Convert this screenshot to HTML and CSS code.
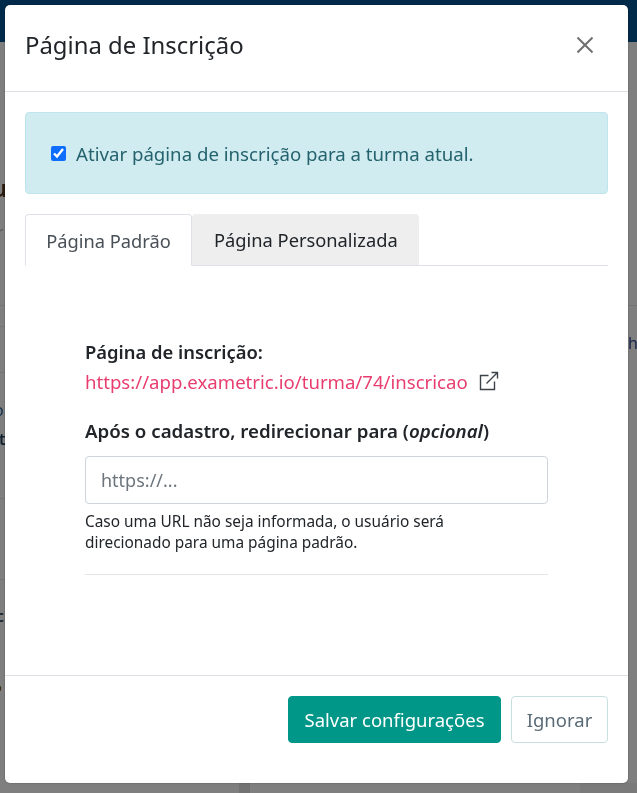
FILE: index.html
```html
<!DOCTYPE html>
<html lang="pt">
<head>
<meta charset="utf-8">
<title>Página de Inscrição</title>
<link rel="stylesheet" href="styles.css">
</head>
<body>
<div class="page">
  <div class="topbar"></div>
  <div class="line l1"></div>
  <div class="line l2"></div>
  <div class="line l3"></div>
  <div class="line l4"></div>
  <div class="line l5"></div>
  <div class="line l6"></div>
  <span class="frag f1">u</span>
  <span class="frag f2">r</span>
  <span class="frag f3">o</span>
  <span class="frag f4">t</span>
  <span class="frag f5">c</span>
  <span class="frag f6">o</span>
  <span class="frag f7">h</span>
  <div class="col c1"></div>
  <div class="col c2"></div>
</div>
<main class="modal">
  <header class="modal-header">
    <h1 class="modal-title">Página de Inscrição</h1>
    <button class="close" type="button" aria-label="Fechar">
      <svg width="16" height="16" viewBox="0 0 16 16"><path d="M0.5 0.5 15.5 15.5M15.5 0.5 0.5 15.5" stroke="#6f6f6f" stroke-width="2" fill="none"/></svg>
    </button>
  </header>
  <section class="modal-body">
    <label class="alert">
      <input class="check" type="checkbox" checked>
      <span>Ativar página de inscrição para a turma atual.</span>
    </label>
    <nav class="tabs">
      <a class="tab active">Página Padrão</a>
      <a class="tab">Página Personalizada</a>
    </nav>
    <div class="pane">
      <div class="strong">Página de inscrição:</div>
      <div class="link-row">
        <a class="link">https://app.exametric.io/turma/74/inscricao</a>
        <svg class="ext" width="20" height="20" viewBox="0 0 20 20"><path d="M9.5 4.5H1.5V18.5H15.5V10.5M7.5 12.5 18.5 1.5M12.5 1.5H18.5V7.5" stroke="#3c4248" stroke-width="1.4" fill="none"/></svg>
      </div>
      <div class="strong second">Após o cadastro, redirecionar para (<em>opcional</em>)</div>
      <input class="input" type="text" placeholder="https://...">
      <p class="help">Caso uma URL não seja informada, o usuário será direcionado para uma página padrão.</p>
      <hr class="rule">
    </div>
  </section>
  <footer class="modal-footer">
    <button class="btn primary" type="button">Salvar configurações</button>
    <button class="btn ghost" type="button">Ignorar</button>
  </footer>
</main>
</body>
</html>
```
FILE: styles.css
```css
* { box-sizing: border-box; }
html, body { margin: 0; height: 100%; }
body {
  background: #7f7f7f;
  font-family: "Noto Sans", "Open Sans", sans-serif;
  color: #212529;
  overflow: hidden;
}
.page { position: fixed; inset: 0; background: #7f7f7f; }
.topbar { position: absolute; left: 0; right: 0; top: 0; height: 42px; background: #002a4a; }
.line { position: absolute; height: 1px; background: #747474; }
.l1 { left: 0; width: 5px; top: 305px; }
.l2 { left: 0; width: 5px; top: 326px; }
.l3 { left: 0; width: 5px; top: 372px; }
.l4 { left: 0; width: 5px; top: 498px; }
.l5 { left: 0; width: 5px; top: 579px; }
.l6 { left: 628px; width: 9px; top: 305px; }
.frag { position: absolute; font-size: 16px; line-height: 20px; color: #10202e; }
.f1 { left: -8px; top: 174px; font-size: 24px; line-height: 28px; font-weight: 700; color: #2a1a10; }
.f2 { left: -3px; top: 222px; color: #555b60; }
.f3 { left: -6px; top: 400px; color: #0c2f4c; }
.f4 { left: -1px; top: 429px; font-weight: 600; }
.f5 { left: -4px; top: 606px; font-weight: 600; }
.f6 { left: -6px; top: 677px; font-size: 13px; color: #3a2e14; }
.f7 { left: 628px; top: 333px; color: #14244a; }
.col { position: absolute; top: 783px; bottom: 0; width: 11px; background: #737373; }
.c1 { left: 239px; }
.c2 { left: 580px; width: 57px; background: #7a7a7a; }

.modal {
  position: relative;
  margin: 5px 0 0 5px;
  width: 623px;
  height: 778px;
  background: #fff;
  border-radius: 5px;
  display: flex;
  flex-direction: column;
  box-shadow: 0 0 2px rgba(0,0,0,.35);
}
.modal-header {
  height: 87px;
  flex: none;
  display: flex;
  align-items: center;
  justify-content: space-between;
  padding: 0 35px 6px 20px;
  border-bottom: 1px solid #dee2e6;
}
.modal-title { margin: 0; font-size: 23.9px; font-weight: 400; line-height: 30px; color: #212529; }
.close { width: 16px; height: 16px; padding: 0; border: 0; background: none; display: block; }
.modal-body { flex: 1; padding: 20px 20px 0; }
.alert {
  height: 82px;
  display: flex;
  align-items: center;
  gap: 10px;
  padding: 0 25px;
  background: #d1ecf1;
  border: 1px solid #bee5eb;
  border-radius: 4px;
  color: #24626d;
  font-size: 18.65px;
}
.check { width: 15px; height: 15px; margin: 0; accent-color: #0d6efd; }
.tabs { display: flex; margin-top: 20px; height: 52px; border-bottom: 1px solid #dee2e6; }
.tab {
  display: flex;
  align-items: center;
  padding: 0 21px 0 22px;
  height: 51px;
  font-size: 18.3px;
  color: #212529;
  background: #eeeeee;
  border-radius: 4px 4px 0 0;
}
.tab.active {
  width: 167px;
  height: 52px;
  justify-content: center;
  padding: 0;
  background: #fff;
  color: #495057;
  border: 1px solid #dee2e6;
  border-bottom-color: #fff;
}
.pane { padding: 74px 60px 0; }
.strong { font-size: 18.4px; font-weight: 600; line-height: 24px; color: #212529; }
.link-row { display: flex; align-items: center; gap: 11px; height: 32px; margin-top: 1px; }
.link { color: #e83e6f; font-size: 18.6px; }
.ext { flex: none; }
.second { margin-top: 22px; font-size: 18.7px; }
.input {
  display: block;
  width: 100%;
  height: 48px;
  margin-top: 13px;
  padding: 0 15px;
  border: 1px solid #ced4da;
  border-radius: 4px;
  font: inherit;
  font-size: 18px;
  color: #495057;
}
.input::placeholder { color: #6c757d; opacity: 1; }
.help { margin: 7px 0 0; font-size: 15.4px; line-height: 21px; color: #212529; padding-right: 70px; }
.rule { margin: 21px 0 0; border: 0; border-top: 1px solid #e3e5e8; }
.modal-footer {
  height: 108px;
  flex: none;
  display: flex;
  justify-content: flex-end;
  gap: 10px;
  padding: 20px 20px 0;
  border-top: 1px solid #dee2e6;
}
.btn {
  height: 47px;
  border-radius: 4px;
  font: inherit;
  font-size: 18.5px;
  padding: 0;
}
.primary { width: 213px; background: #009688; border: 1px solid #009688; color: #fff; }
.ghost { width: 97px; background: #fff; border: 1px solid #c9dfdf; color: #5a6b78; }
```
